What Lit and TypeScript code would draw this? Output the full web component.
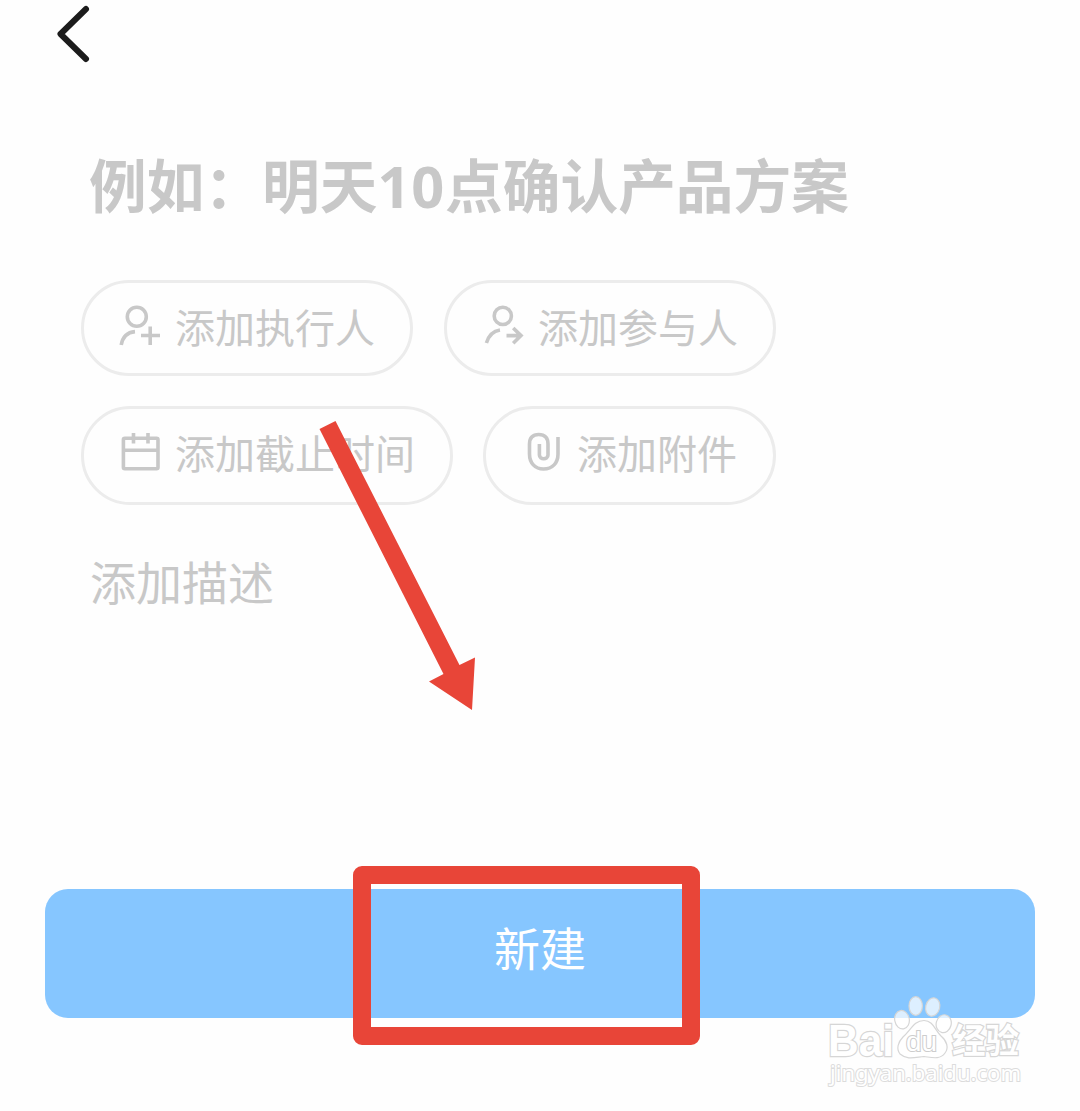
import { LitElement, html, css, svg } from "lit";
import { customElement, property } from "lit/decorators.js";

const icons = {
  assignee: svg`<circle cx="17.8" cy="12.8" r="9.5"/><path d="M2.200 41C3.500 33.500 8 28.300 16 27.600"/><path d="M22 31.500H41M31.200 22.500V41"/>`,
  member: svg`<circle cx="20.8" cy="11.9" r="8.600"/><path d="M4.400 39C6.500 32 11.500 27 18 26"/><path d="M24.500 31.600H39M31.200 24L39 31.600L31.200 39.200"/>`,
  calendar: svg`<rect x="4.400" y="8.300" width="34.600" height="30.500" rx="1.5"/><path d="M5 20.300H39M14.500 3V13.600M29 3V13.600"/>`,
  clip: svg`<path d="M18.400 14V25C18.400 30 27 30 27 25V14C27 8 24 4.500 17.700 4.500C11.500 4.500 8.500 8 8.500 14V24C8.500 33 14 39 22.500 39C31.500 39 37 33 37 24V7"/>`,
};

@customElement("add-chip")
class AddChip extends LitElement {
  @property() icon: keyof typeof icons = "assignee";
  @property() label = "";
  static styles = css`
    :host {
      display: flex;
      box-sizing: border-box;
      align-items: center;
      justify-content: center;
      gap: 14px;
      border: 3px solid #ececec;
      border-radius: 50px;
      padding: 0 35px 4px;
      color: #c8c8c8;
    }
    .icon {
      width: 42px;
      height: 44px;
      flex: none;
      fill: none;
      stroke: currentColor;
      stroke-width: 3.6;
    }
    .label {
      font-size: 40px;
      line-height: 58px;
      white-space: nowrap;
    }
  `;
  render() {
    return html`<svg class="icon" viewBox="0 0 42 44">${icons[this.icon]}</svg>
      <span class="label">${this.label}</span>`;
  }
}

@customElement("brand-mark")
class BrandMark extends LitElement {
  static styles = css`
    :host {
      display: block;
    }
    .mark {
      display: block;
      width: 210px;
      height: 106px;
    }
    .line {
      fill: #fff;
      fill-opacity: 0.72;
      stroke: #d6d6d6;
      stroke-width: 1.2;
    }
    .text {
      fill: #fff;
      stroke: #cdcdcd;
      stroke-width: 2;
      paint-order: stroke;
      font-family: "Liberation Sans", "Noto Sans CJK SC", sans-serif;
    }
    .bold {
      font-weight: 700;
      stroke: #d6d6d6;
      stroke-width: 2.4;
    }
    .site {
      font-family: "Noto Sans", sans-serif;
      stroke: #dcdcdc;
    }
  `;
  render() {
    return html`<svg class="mark" viewBox="820 990 210 106">
      <ellipse class="line" cx="902" cy="1019.700" rx="7.300" ry="9.300" transform="rotate(-10 902 1019.700)"/>
      <ellipse class="line" cx="915.700" cy="1006" rx="6.700" ry="9.300"/>
      <ellipse class="line" cx="932.700" cy="1007" rx="7" ry="9.300" transform="rotate(14 932.700 1007)"/>
      <ellipse class="line" cx="943.700" cy="1023.700" rx="7.500" ry="9" transform="rotate(14 943.700 1023.700)"/>
      <path class="line" d="M924 1020.500C933 1020.500 935 1030 941 1036C947 1041 949 1048 945 1053C940 1060 932 1057.500 924 1056.500C914 1057.500 907 1060 900 1054C896 1049 898 1042 903 1037C911 1030 914 1020.500 924 1020.500Z"/>
      <text class="text bold" x="828" y="1056" font-size="45" textLength="66" lengthAdjust="spacingAndGlyphs">Bai</text>
      <text class="text" x="906" y="1051" font-size="27" textLength="31" lengthAdjust="spacingAndGlyphs">du</text>
      <text class="text bold" x="952" y="1053" font-size="34" textLength="67" lengthAdjust="spacingAndGlyphs">经验</text>
      <text class="text site" x="830" y="1081" font-size="22" textLength="191" lengthAdjust="spacingAndGlyphs">jingyan.baidu.com</text>
    </svg>`;
  }
}

@customElement("app-root")
class AppRoot extends LitElement {
  static styles = css`
    :host {
      display: block;
      position: relative;
      box-sizing: border-box;
      width: 1080px;
      height: 1111px;
      overflow: hidden;
      background: #fefefe;
      font-family: "Noto Sans CJK SC", sans-serif;
    }
    .page {
      display: flex;
      flex-direction: column;
      height: 100%;
    }
    .bar {
      height: 140px;
      padding: 4px 0 0 54px;
      box-sizing: border-box;
    }
    .back {
      display: block;
      width: 40px;
      height: 60px;
      fill: none;
      stroke: #1b1b1b;
      stroke-width: 6;
      stroke-linecap: round;
      stroke-linejoin: round;
    }
    .title {
      height: 140px;
      box-sizing: border-box;
      padding: 1px 0 0 89px;
      color: #c8c8c8;
      font-size: 57.7px;
      font-weight: 700;
      line-height: 84px;
      white-space: nowrap;
    }
    .num {
      font-family: "Noto Sans", sans-serif;
      letter-spacing: 0.8px;
    }
    .chips {
      display: grid;
      grid-template-rows: 96px 99px;
      row-gap: 30px;
      padding-left: 81px;
    }
    .row {
      display: flex;
      gap: 31px;
    }
    .row + .row {
      gap: 30px;
    }
    .row + .row add-chip {
      padding-bottom: 7px;
    }
    .row + .row add-chip:last-child {
      padding-right: 36px;
    }
    .desc {
      margin: 41px 0 0 90px;
      color: #c8c8c8;
      font-size: 46px;
      line-height: 68px;
    }
    .submit {
      position: relative;
      display: flex;
      align-items: center;
      justify-content: center;
      height: 129px;
      margin: auto 45px 93px;
      border: 0;
      border-radius: 23px;
      background: #86c6ff;
      color: #fff;
      font: 46px/68px "Noto Sans CJK SC", sans-serif;
      padding: 0 0 15px;
    }
    .frame {
      position: absolute;
      left: 353px;
      top: 866px;
      width: 347px;
      height: 179px;
      box-sizing: border-box;
      border: 18px solid #e84538;
      border-radius: 9px;
    }
    .arrow {
      position: absolute;
      left: 310px;
      top: 410px;
      width: 180px;
      height: 310px;
      fill: #e84538;
    }
    .brand {
      position: absolute;
      left: 820px;
      top: 990px;
    }
  `;
  render() {
    return html`
      <main class="page">
        <header class="bar">
          <svg class="back" viewBox="54 4 40 60"><path d="M86 9L60.500 34L86 59"/></svg>
        </header>
        <div class="title">例如：明天<span class="num">10</span>点确认产品方案</div>
        <section class="chips">
          <div class="row">
            <add-chip icon="assignee" label="添加执行人"></add-chip>
            <add-chip icon="member" label="添加参与人"></add-chip>
          </div>
          <div class="row">
            <add-chip icon="calendar" label="添加截止时间"></add-chip>
            <add-chip icon="clip" label="添加附件"></add-chip>
          </div>
        </section>
        <div class="desc">添加描述</div>
        <button class="submit">新建</button>
      </main>
      <svg class="arrow" viewBox="310 410 180 310">
        <path d="M319.500 429L335.500 421L459.500 665L475 657.500L472 710L429 681.500L443.500 674Z"/>
      </svg>
      <div class="frame"></div>
      <brand-mark class="brand"></brand-mark>
    `;
  }
}
